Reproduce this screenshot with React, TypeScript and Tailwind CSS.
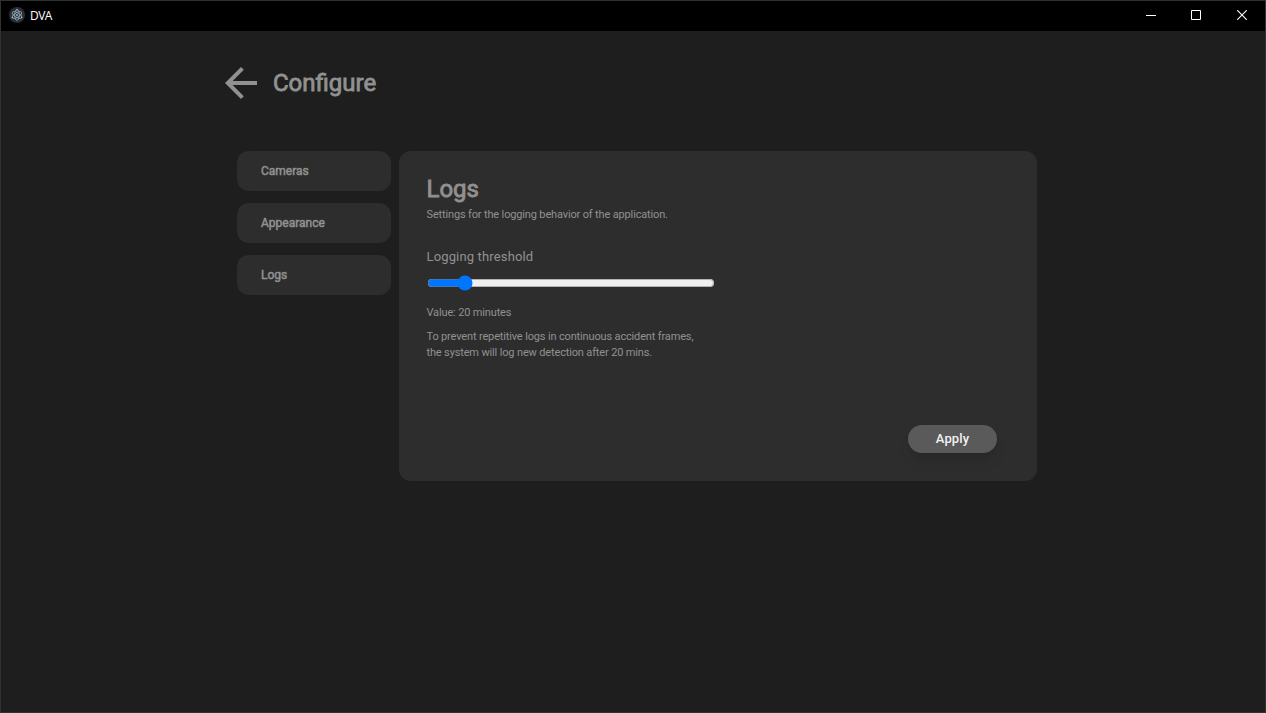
import { useState } from "react";

const sections = ["Cameras", "Appearance", "Logs"];

function AppIcon() {
  return (
    <svg width="16" height="16" viewBox="0 0 16 16" fill="none">
      <circle cx="8" cy="8" r="8" fill="#2b2e3a" />
      <g stroke="#a5c4ca" strokeWidth="0.8" opacity="0.85">
        <ellipse cx="8" cy="8" rx="5.3" ry="2.3" transform="rotate(30 8 8)" />
        <ellipse cx="8" cy="8" rx="5.3" ry="2.3" transform="rotate(90 8 8)" />
        <ellipse cx="8" cy="8" rx="5.3" ry="2.3" transform="rotate(150 8 8)" />
      </g>
      <circle cx="8" cy="8" r="0.9" fill="#a5c4ca" />
      <circle cx="3.3" cy="10.6" r="0.8" fill="#a5c4ca" />
      <circle cx="12.7" cy="10.6" r="0.8" fill="#a5c4ca" />
      <circle cx="8" cy="2.8" r="0.8" fill="#a5c4ca" />
    </svg>
  );
}

function TitleBar() {
  return (
    <header className="flex h-[30px] shrink-0 items-start bg-black pl-2 text-white">
      <div className="flex h-7 items-center">
        <AppIcon />
        <span className="ml-[5px] pt-px font-['Open_Sans',sans-serif] text-[12px] leading-4 tracking-[-0.5px]">DVA</span>
      </div>
      <div className="ml-auto flex h-7">
        <button className="flex w-[45px] items-center justify-center" aria-label="Minimize">
          <svg width="10" height="10" shapeRendering="crispEdges"><path d="M0 5h10v1H0z" fill="#fff" /></svg>
        </button>
        <button className="flex w-[46px] items-center justify-center" aria-label="Maximize">
          <svg width="10" height="10" fill="none" stroke="#fff"><path d="M.5.5h9v9h-9z" /></svg>
        </button>
        <button className="flex w-[46px] items-center justify-center" aria-label="Close">
          <svg width="10" height="10" fill="none" stroke="#fff" strokeWidth="1.1"><path d="M.2.2l9.6 9.6M9.8.2L.2 9.8" /></svg>
        </button>
      </div>
    </header>
  );
}

export default function App() {
  const [minutes, setMinutes] = useState(20);
  return (
    <div className="flex h-screen flex-col overflow-hidden border border-[#303232] bg-[#1e1e1e] font-[Roboto,sans-serif] text-[#919191]">
      <TitleBar />
      <main className="w-[1036px] pt-[36px] pl-[224px]">
        <div className="flex h-8 items-center">
          <svg width="32" height="32" viewBox="0 0 32 32" fill="#919191">
            <path d="M32 14H7.66L18.84 2.82 16 0 0 16l16 16 2.82-2.82L7.66 18H32z" />
          </svg>
          <h1 className="ml-4 text-[24px] leading-8 font-normal [-webkit-text-stroke:0.8px_#919191]">Configure</h1>
        </div>
        <div className="mt-[52px] flex gap-2 pl-3">
          <nav className="flex w-[154px] flex-col gap-3">
            {sections.map((name) => (
              <button key={name} className="h-10 rounded-xl bg-[#2d2d2d] pl-6 text-left text-[12px] leading-4 font-normal [-webkit-text-stroke:0.5px_#919191]">
                {name}
              </button>
            ))}
          </nav>
          <section className="flex h-[330px] w-[638px] flex-col rounded-xl bg-[#2d2d2d] pt-[22px] pr-10 pb-7 pl-[27.5px]">
            <h2 className="text-[24px] leading-8 font-normal [-webkit-text-stroke:0.8px_#919191]">Logs</h2>
            <p className="mt-0.5 text-[11px] leading-4 tracking-[-0.15px]">Settings for the logging behavior of the application.</p>
            <label htmlFor="threshold" className="mt-6 text-[13px] leading-5 tracking-[0.15px]">Logging threshold</label>
            <input
              id="threshold"
              type="range"
              min={0}
              max={180}
              value={minutes}
              onChange={(e) => setMinutes(Number(e.target.value))}
              className="mt-2 h-4 w-72"
            />
            <p className="mt-3.5 text-[11px] leading-4 tracking-[-0.15px]">Value: {minutes} minutes</p>
            <p className="mt-2 w-72 text-[11px] leading-4 tracking-[-0.15px]">
              To prevent repetitive logs in continuous accident frames,
              <br />
              the system will log new detection after {minutes} mins.
            </p>
            <button className="mt-auto h-7 w-[89px] self-end rounded-full bg-[#5a5a5a] text-[13px] leading-5 font-medium tracking-[0.1px] text-[#f2f2f2] shadow-lg">
              Apply
            </button>
          </section>
        </div>
      </main>
    </div>
  );
}
